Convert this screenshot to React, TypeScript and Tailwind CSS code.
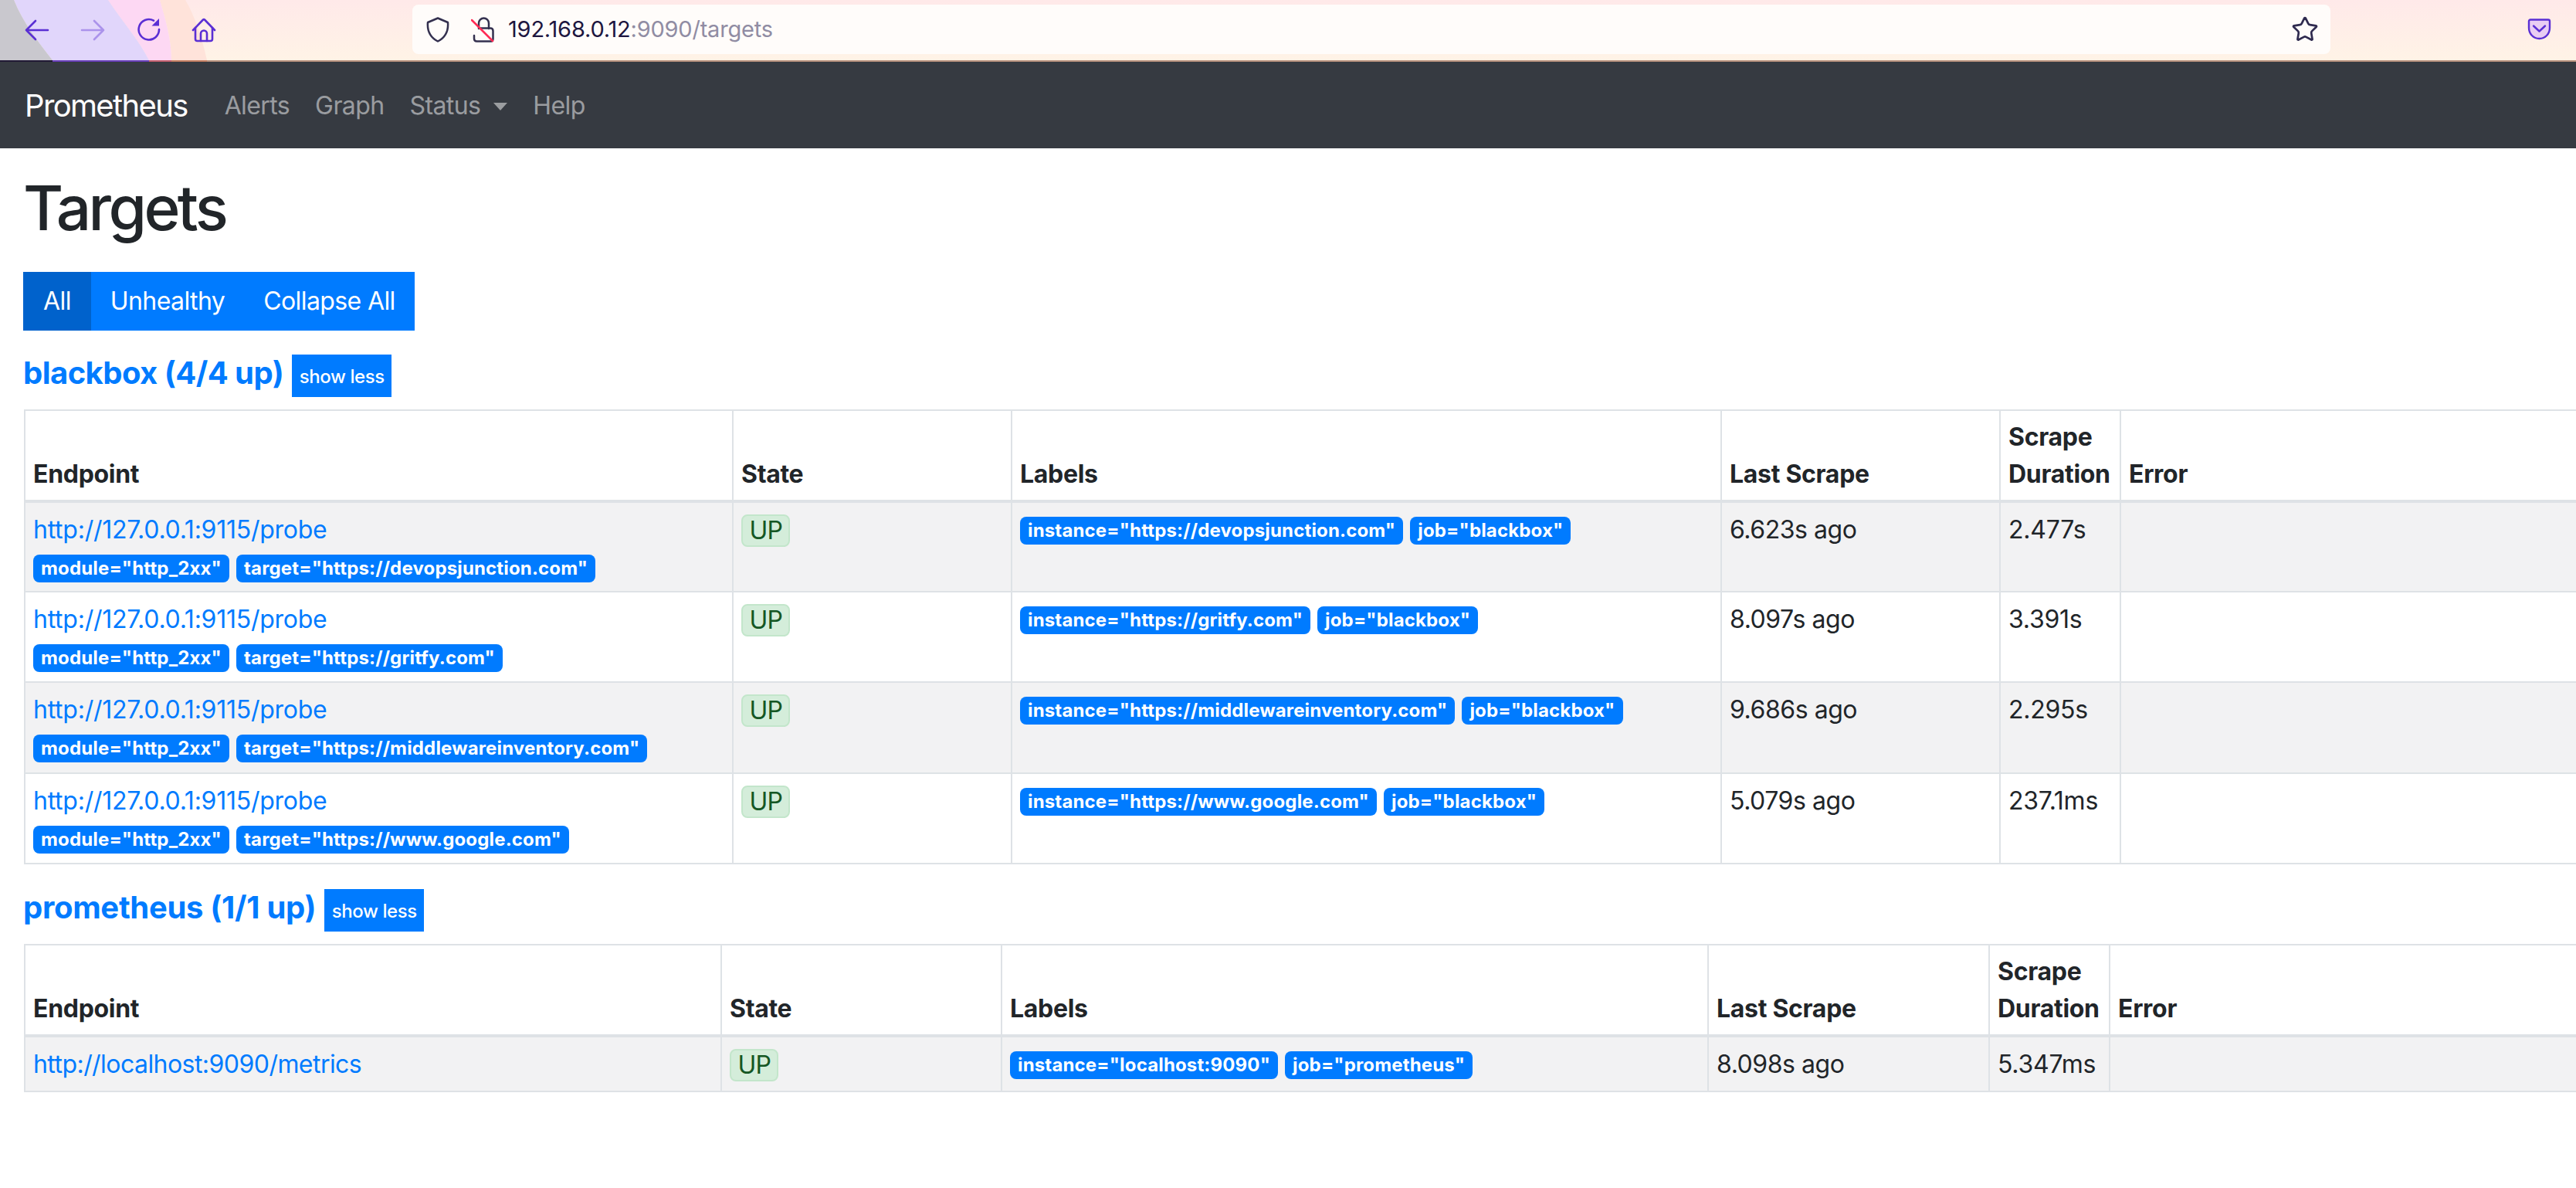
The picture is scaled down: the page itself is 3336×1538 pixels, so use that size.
import { Star } from "lucide-react";

const Badge = ({ children }: { children: string }) => (
  <span className="inline-block h-[36px] rounded-[8px] bg-[#007bff] px-[10px] text-[24px] leading-[35px] font-bold tracking-[0.15px] whitespace-nowrap text-white">
    {children}
  </span>
);

type Row = {
  url: string;
  params?: string[];
  labels: string[];
  last: string;
  dur: string;
};

const blackbox: Row[] = [
  {
    url: "http://127.0.0.1:9115/probe",
    params: ['module="http_2xx"', 'target="https://devopsjunction.com"'],
    labels: ['instance="https://devopsjunction.com"', 'job="blackbox"'],
    last: "6.623s ago",
    dur: "2.477s",
  },
  {
    url: "http://127.0.0.1:9115/probe",
    params: ['module="http_2xx"', 'target="https://gritfy.com"'],
    labels: ['instance="https://gritfy.com"', 'job="blackbox"'],
    last: "8.097s ago",
    dur: "3.391s",
  },
  {
    url: "http://127.0.0.1:9115/probe",
    params: ['module="http_2xx"', 'target="https://middlewareinventory.com"'],
    labels: ['instance="https://middlewareinventory.com"', 'job="blackbox"'],
    last: "9.686s ago",
    dur: "2.295s",
  },
  {
    url: "http://127.0.0.1:9115/probe",
    params: ['module="http_2xx"', 'target="https://www.google.com"'],
    labels: ['instance="https://www.google.com"', 'job="blackbox"'],
    last: "5.079s ago",
    dur: "237.1ms",
  },
];

const prom: Row[] = [
  {
    url: "http://localhost:9090/metrics",
    labels: ['instance="localhost:9090"', 'job="prometheus"'],
    last: "8.098s ago",
    dur: "5.347ms",
  },
];

const Section = ({
  title,
  titleClass,
  rows,
  cols,
  rowH,
  linkClass,
}: {
  title: string;
  titleClass: string;
  rows: Row[];
  cols: number[];
  rowH: (i: number) => string;
  linkClass: string;
}) => (
  <section>
    <div className="flex h-[55px] items-start gap-[11px]">
      <h2 className={`text-[40px] leading-[48px] font-bold text-[#007bff] ${titleClass}`}>{title}</h2>
      <button className="h-[55px] bg-[#007bff] px-[9.5px] pt-[2px] text-[24px] font-medium tracking-[-0.4px] text-white">show less</button>
    </div>
    <table className="mt-[16px] ml-px w-[3500px] table-fixed border-collapse text-[32px] leading-[48px] tracking-[-0.25px] text-[#212529]">
      <colgroup>
        {cols.map((c, i) => (
          <col key={i} style={{ width: c }} />
        ))}
      </colgroup>
      <thead>
        <tr className="h-[117px]">
          {["Endpoint", "State", "Labels", "Last Scrape", "Scrape Duration", "Error"].map((h) => (
            <th
              key={h}
              className="border-2 border-b-4 border-[#dee2e6] px-[10px] pt-[10px] pb-[9px] text-left align-bottom font-bold tracking-[-0.3px]"
            >
              {h}
            </th>
          ))}
        </tr>
      </thead>
      <tbody>
        {rows.map((r, i) => (
          <tr key={i} className={`${i % 2 === 0 ? "bg-[#f2f2f3]" : "bg-white"} ${rowH(i)}`}>
            <td className="border-2 border-[#dee2e6] px-[10px] pt-[11px] pb-[10px] align-top">
              <a className={`block text-[#007bff] ${linkClass}`}>{r.url}</a>
              {r.params && (
                <div className="mt-[8px] flex gap-[9px]">
                  {r.params.map((p) => (
                    <Badge key={p}>{p}</Badge>
                  ))}
                </div>
              )}
            </td>
            <td className="border-2 border-[#dee2e6] px-[10px] pt-[12px] align-top">
              <span className="inline-block h-[42px] rounded-[8px] border-2 border-[#c3e6cb] bg-[#d4edda] px-[8.5px] leading-[38px] tracking-[-0.9px] text-[#155724]">
                UP
              </span>
            </td>
            <td className="border-2 border-[#dee2e6] px-[10px] pt-[18px] align-top">
              <div className="flex gap-[9px]">
                {r.labels.map((p) => (
                  <Badge key={p}>{p}</Badge>
                ))}
              </div>
            </td>
            <td className="border-2 border-[#dee2e6] px-[10px] pt-[11px] align-top tracking-[-0.45px]">{r.last}</td>
            <td className="border-2 border-[#dee2e6] px-[10px] pt-[11px] align-top">{r.dur}</td>
            <td className="border-2 border-[#dee2e6]"></td>
          </tr>
        ))}
      </tbody>
    </table>
  </section>
);

export default function App() {
  return (
    <div className="h-[1538px] w-[3336px] overflow-hidden bg-white font-['Inter',sans-serif]">
      <header className="relative flex h-[80px] items-start pt-[6px] pl-[32px]">
        <svg className="absolute inset-0" width="3336" height="80" viewBox="0 0 3336 80">
          <defs>
            <linearGradient id="bar" x1="0" y1="0" x2="0" y2="1">
              <stop offset="0" stopColor="#ffe9e9" />
              <stop offset="1" stopColor="#fff3e6" />
            </linearGradient>
          </defs>
          <rect width="3336" height="78" fill="url(#bar)" />
          <path d="M207 0C214 25 222 50 222 78H268C262 50 252 20 240 0Z" fill="#ffe3da" />
          <path d="M140 0C160 30 180 52 193 78H222C222 50 214 25 207 0Z" fill="#fdd8f3" />
          <path d="M18 0C30 30 50 55 68 78H193C180 52 160 30 140 0Z" fill="#e1d6fb" />
          <path d="M0 0H18C30 30 50 55 68 78H0Z" fill="#c9c8ce" />
          <rect y="78" width="68" height="2" fill="#211a35" />
          <rect x="68" y="78" width="125" height="2" fill="#6a3fb9" />
          <rect x="193" y="78" width="29" height="2" fill="#c4606f" />
          <rect x="222" y="78" width="46" height="2" fill="#c47f62" />
          <rect x="268" y="78" width="3068" height="2" fill="#b9937f" />
        </svg>
        <div className="relative flex h-[66px] items-center gap-[40px]">
          <svg width="32" height="32" viewBox="0 0 32 32" fill="none" stroke="#5a2fd4" strokeWidth="2.6" strokeLinecap="round" strokeLinejoin="round">
            <path d="M2 16H30M14 4L2 16L14 28" />
          </svg>
          <svg width="32" height="32" viewBox="0 0 32 32" fill="none" stroke="#5a2fd4" strokeOpacity="0.4" strokeWidth="2.6" strokeLinecap="round" strokeLinejoin="round">
            <path d="M2 16H30M18 4L30 16L18 28" />
          </svg>
          <svg width="32" height="32" viewBox="0 0 32 32" fill="none">
            <path d="M30 15A13.2 13.2 0 1 1 23 3.6" stroke="#5a2fd4" strokeWidth="2.6" strokeLinecap="round" />
            <path d="M20.5 10.5H30V1Z" fill="#5a2fd4" />
          </svg>
          <svg width="32" height="32" viewBox="0 0 32 32" fill="none" stroke="#5a2fd4" strokeWidth="2.6" strokeLinecap="round" strokeLinejoin="round">
            <path d="M2 16L15 2.500A1.500 1.500 0 0 1 17 2.500L30 16" />
            <path d="M5 13V27.500Q5 30 7.500 30H24.500Q27 30 27 27.500V13" />
            <path d="M12 30V20.500A4 4 0 0 1 20 20.500V30" />
          </svg>
        </div>
        <div className="relative ml-[254px] flex h-[64px] w-[2484px] items-center rounded-[8px] bg-[#fffcfa]">
          <svg className="ml-[18px]" width="30" height="33" viewBox="0 0 30 33" fill="none" stroke="#34304f" strokeWidth="2.5" strokeLinejoin="round">
            <path d="M15 1.500L28 7C29 19 24 27 15 31.500C6 27 1 19 2 7Z" />
          </svg>
          <svg className="ml-[28px]" width="30" height="33" viewBox="0 0 30 33" fill="none" strokeWidth="2.5" strokeLinecap="round">
            <path d="M10 15V8A6.500 6.500 0 0 1 23 8V15M4 24V28Q4 31.500 7.500 31.500H26Q28.500 31.500 28.500 28V18Q28.500 14.500 25 14.500H12" stroke="#34304f" />
            <path d="M1 4L28 31" stroke="#ff2b55" />
          </svg>
          <span className="ml-[18px] text-[29px] tracking-[-0.2px] text-[#1d1640]">
            192.168.0.12<span className="text-[#908ca3]">:9090/targets</span>
          </span>
          <Star className="ml-auto mr-[15px]" size={36} strokeWidth={1.8} color="#2f2a4f" />
        </div>
        <svg className="relative mt-[18px] ml-[255px]" width="32" height="28" viewBox="0 0 32 28" fill="#e9cdf3" stroke="#5a2fd4" strokeWidth="2.4" strokeLinecap="round" strokeLinejoin="round">
          <path d="M2 3.500Q2 1.500 4 1.500H27Q29 1.500 29 3.500V12C29 20 23 26 15.500 26C8 26 2 20 2 12Z" />
          <path d="M8 9.500L15.500 16.500L23 9.500" fill="none" />
        </svg>
      </header>

      <nav className="flex h-[112px] items-center bg-[#363a41] pt-[2px] pl-[32px]">
        <span className="text-[40px] tracking-[-1.65px] text-white">Prometheus</span>
        <ul className="ml-[48px] flex items-center text-[32px] tracking-[-0.6px] text-white/50">
          <li>Alerts</li>
          <li className="ml-[33px]">Graph</li>
          <li className="ml-[33px] flex items-center">
            Status
            <span className="mt-[2px] ml-[17px] border-x-[9px] border-t-[10px] border-x-transparent border-t-white/50"></span>
          </li>
          <li className="ml-[33px]">Help</li>
        </ul>
      </nav>

      <main className="px-[30px]">
        <h1 className="mt-[29px] text-[80px] leading-[96px] font-medium tracking-[-3.6px] text-[#212529]">Targets</h1>
        <div className="mt-[35px] flex h-[76px] w-fit text-[32px] tracking-[-0.6px] text-white">
          <button className="w-[88px] bg-[#0062cc]">All</button>
          <button className="w-[198px] bg-[#007bff]">Unhealthy</button>
          <button className="w-[221px] bg-[#007bff]">Collapse All</button>
        </div>
        <div className="mt-[31px]">
          <Section
            title="blackbox (4/4 up)"
            titleClass="tracking-[-0.55px]"
            rows={blackbox}
            cols={[917, 361, 919, 361, 156, 786]}
            rowH={(i) => (i === 2 ? "h-[118px]" : "h-[117px]")}
            linkClass="tracking-[-0.25px]"
          />
        </div>
        <div className="mt-[32px]">
          <Section
            title="prometheus (1/1 up)"
            titleClass="tracking-[-0.3px]"
            rows={prom}
            cols={[902, 363, 915, 364, 156, 800]}
            rowH={() => "h-[69px]"}
            linkClass="tracking-[-0.55px]"
          />
        </div>
      </main>
    </div>
  );
}
